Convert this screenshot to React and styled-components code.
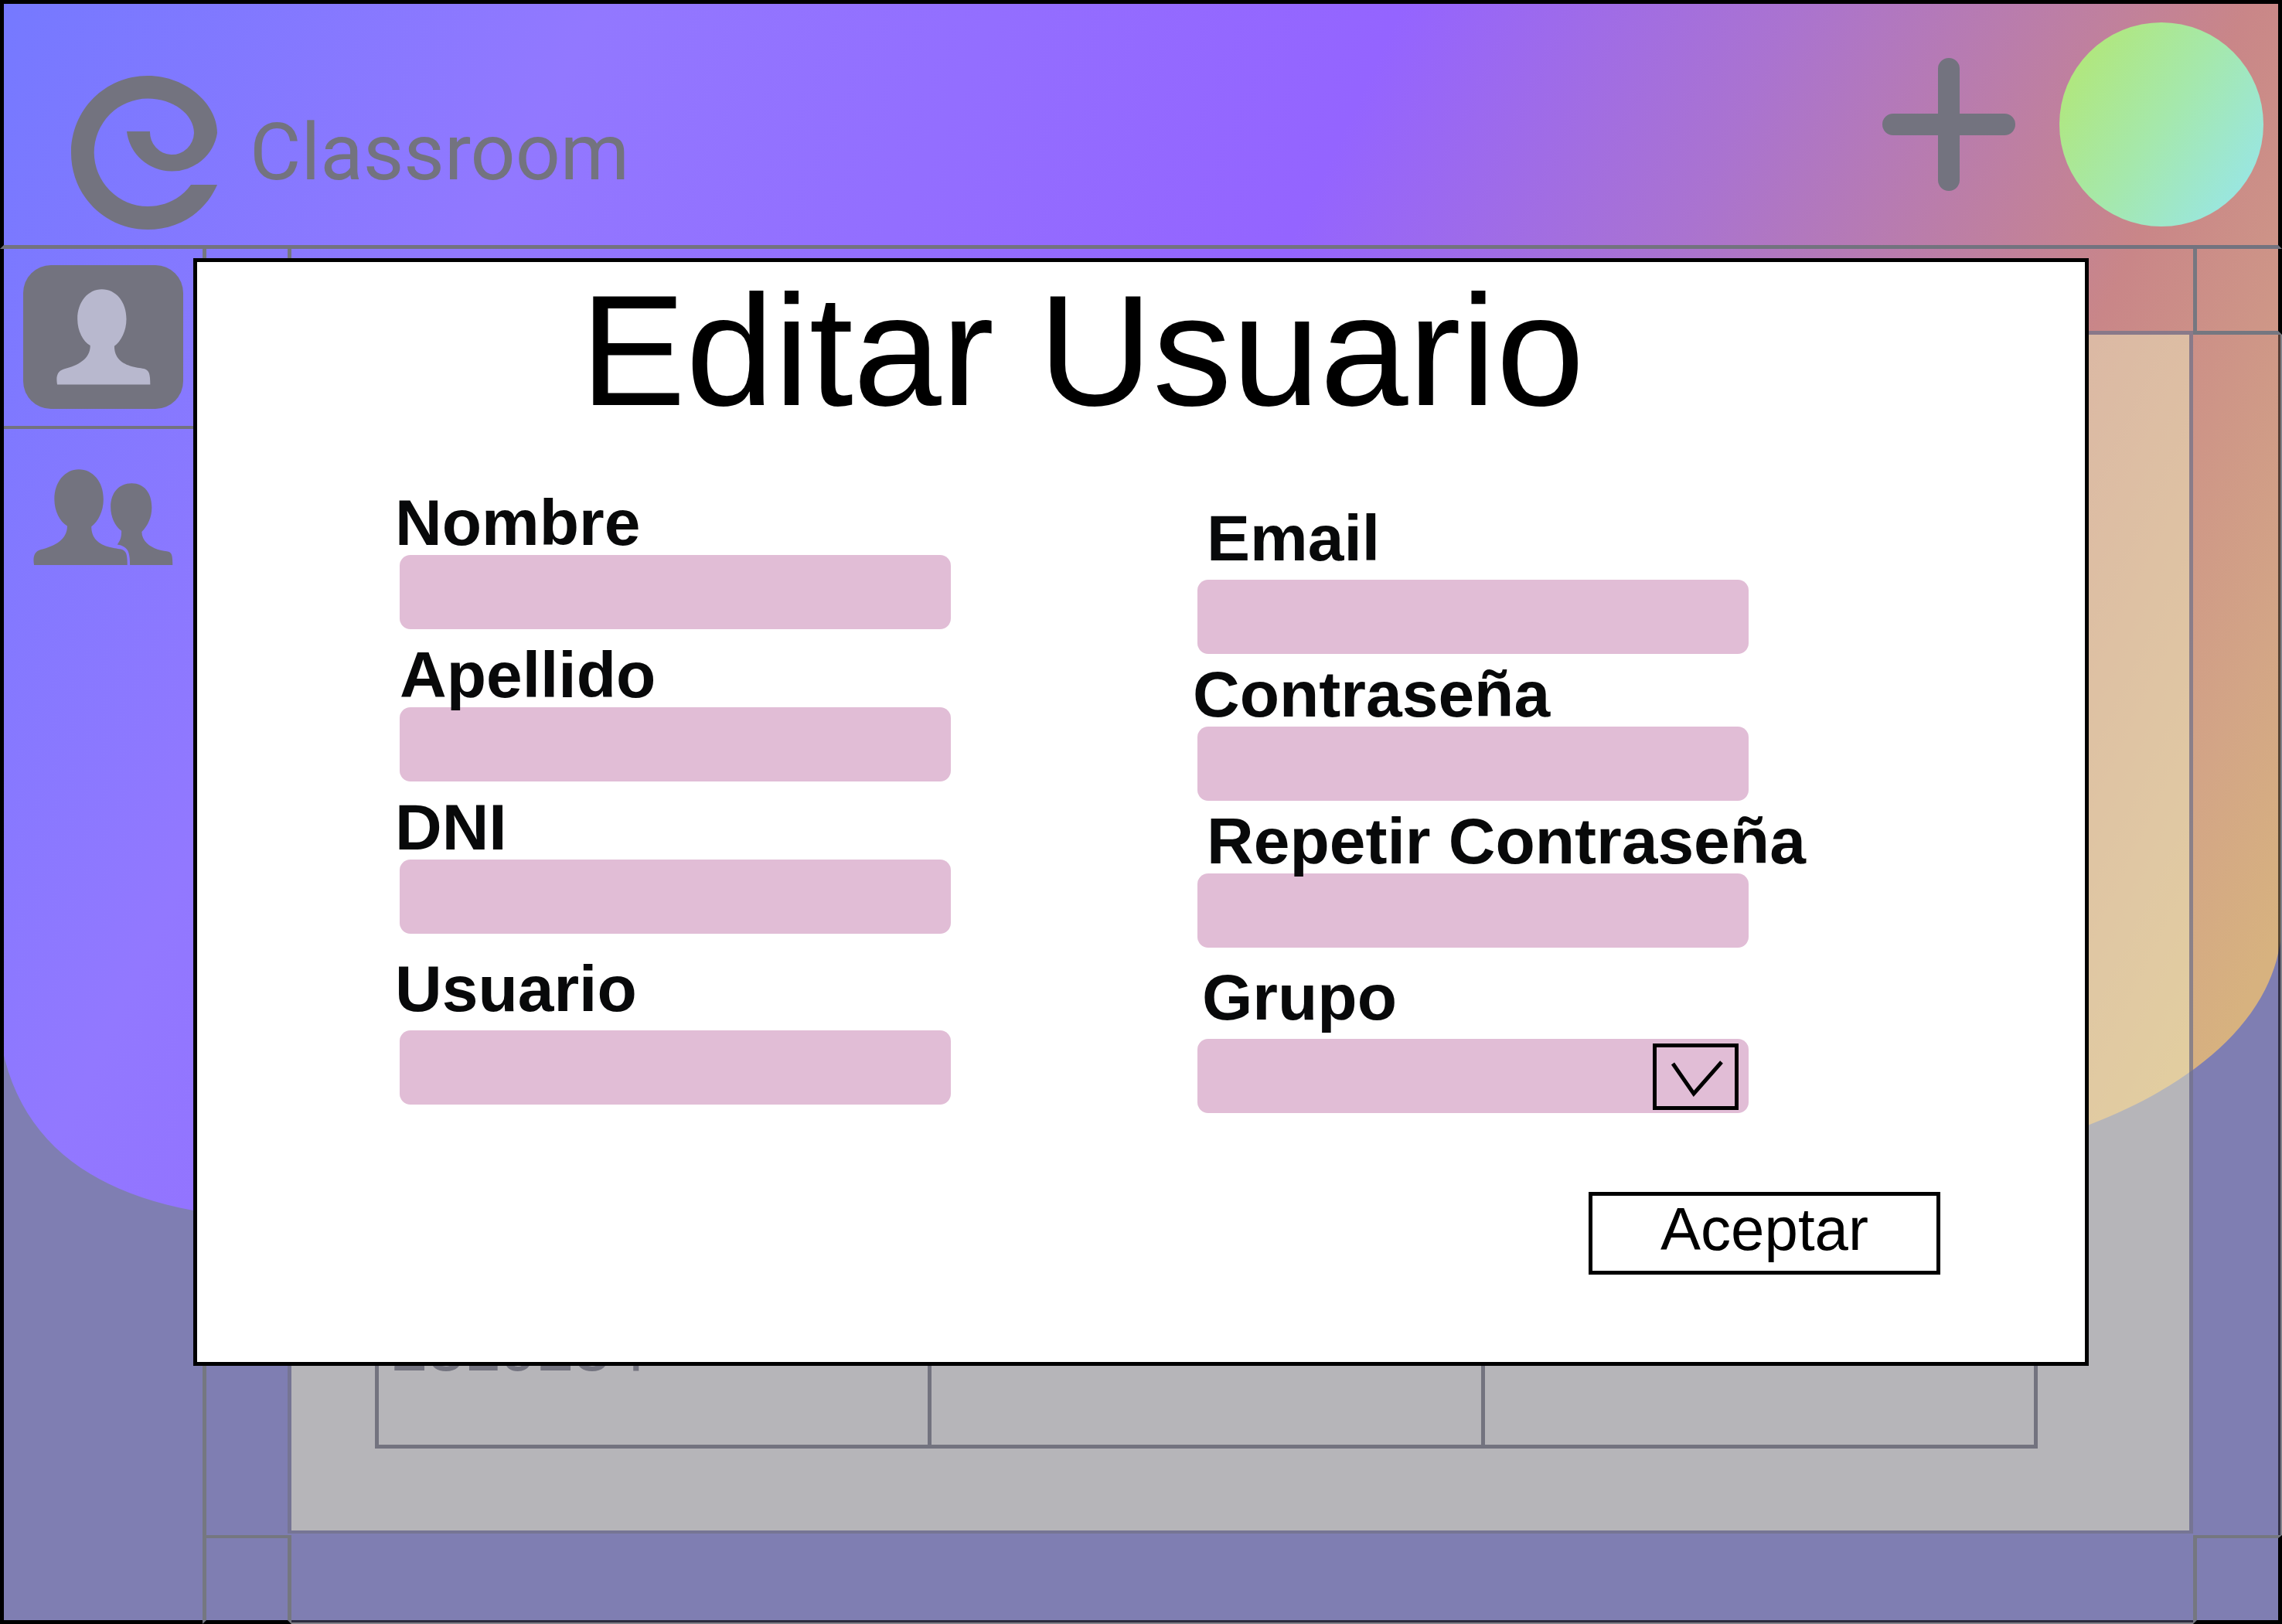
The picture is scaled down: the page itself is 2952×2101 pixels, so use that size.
import React from "react";
import styled, { createGlobalStyle } from "styled-components";

const ink = "#73737f";
const sans = `"Liberation Sans", Arial, sans-serif`;
const rounded = `"Arial Rounded MT Bold", "Liberation Sans", Arial, sans-serif`;

const GlobalStyle = createGlobalStyle`
  *, *::before, *::after { box-sizing: border-box; }
  body { margin: 0; font-family: ${sans}; }
  button, input, select { font: inherit; color: inherit; margin: 0; }
`;

const Screen = styled.div`
  position: relative;
  display: flex;
  flex-direction: column;
  min-height: 100vh;
  background: #7f7eb2;
  overflow: hidden;
`;

const Backdrop = styled.svg`
  position: absolute;
  inset: 0;
  width: 100%;
  height: 100%;
`;

const Header = styled.header`
  position: relative;
  display: flex;
  align-items: center;
  justify-content: space-between;
  height: 322px;
  padding: 0 19px 0 87px;
  border: 5px solid #000;
  border-bottom-color: ${ink};
`;

const Brand = styled.a`
  display: flex;
  align-items: center;
  gap: 42px;
  padding-top: 72px;
  color: ${ink};
  font-family: Roboto, sans-serif;
  font-size: 102px;
  line-height: 120px;
  text-decoration: none;
`;

const Tools = styled.div`
  display: flex;
  align-items: center;
  gap: 57px;
`;

const IconButton = styled.button`
  display: flex;
  padding: 0;
  border: 0;
  background: none;
`;

const Avatar = styled.button`
  width: 264px;
  height: 264px;
  padding: 0;
  border: 0;
  border-radius: 50%;
  background: linear-gradient(125deg, #b1e77c 12%, #a5e8ac 50%, #99e6e2 88%);
`;

const Body = styled.div`
  position: relative;
  flex: 1;
  display: grid;
  grid-template-columns: 262px 115px minmax(0, 1fr) 115px;
  grid-template-rows: 111px 1fr 115px;
`;

const Sidebar = styled.nav`
  grid-row: 1 / -1;
  border-left: 5px solid #000;
  border-bottom: 5px solid #000;
`;

const NavCell = styled.div`
  padding: 21px 0 22px 25px;
  border-bottom: ${(p) => (p.$divided ? `4px solid ${ink}` : "0")};
`;

const NavButton = styled.button`
  display: flex;
  align-items: center;
  justify-content: center;
  width: 207px;
  height: 186px;
  padding: 0;
  border: 0;
  border-radius: 36px;
  color: ${(p) => (p.$active ? "#b8b8ce" : ink)};
  background: ${(p) => (p.$active ? ink : "none")};
`;

const Corner = styled.div`
  border: 0 solid #757780;
  border-left-width: 5px;
  border-top-width: ${(p) => (p.$bottom ? "4px" : "0")};
  border-right: 5px solid ${(p) => (p.$outer ? "#000" : "#757780")};
  border-bottom: 5px solid ${(p) => (p.$bottom ? "#000" : "#757780")};
`;

const LeftEdge = styled.div`
  border-left: 5px solid #757780;
`;

const RightEdge = styled.div`
  margin-right: 2px;
  border-right: 3px solid rgba(0, 0, 0, 0.6);
  box-shadow: 2px 0 0 #82828a;
`;

const BottomEdge = styled.div`
  grid-column: 3;
  margin-bottom: 2px;
  border-bottom: 3px solid rgba(0, 0, 0, 0.65);
  box-shadow: 0 2px 0 #82828a;
`;

const TopEdge = styled.div``;

const Panel = styled.main`
  display: flex;
  flex-direction: column;
  justify-content: flex-end;
  margin: -5px 0 2px -5px;
  padding: 0 196px 106px 108px;
  border: 5px solid rgba(115, 115, 137, 0.75);
  border-bottom-width: 4px;
  background: rgba(237, 235, 191, 0.5);
  background-clip: padding-box;
`;

const Table = styled.table`
  width: 100%;
  table-layout: fixed;
  border-collapse: collapse;
  color: ${ink};
  font-size: 85px;
  line-height: 85px;
  text-align: left;
`;

const Cell = styled.td`
  padding: 16px 16px 83px;
  border: 5px solid ${ink};
`;

const Overlay = styled.div`
  position: absolute;
  inset: 0;
  display: flex;
  padding: 334px 250px;
`;

const Modal = styled.form`
  flex: 1;
  display: flex;
  flex-direction: column;
  padding-top: 12px;
  border: 5px solid #000;
  background: #fff;
  color: #000;
`;

const Title = styled.h1`
  margin: 0 0 79px;
  padding-right: 152px;
  font-size: 205px;
  font-weight: 400;
  line-height: 204px;
  text-align: center;
`;

const Fields = styled.div`
  display: grid;
  grid-template-columns: repeat(2, minmax(0, 1fr));
  align-items: start;
  gap: 319px;
  padding: 0 435px 0 262px;
`;

const Column = styled.div`
  display: flex;
  flex-direction: column;
  gap: ${(p) => p.$gap}px;
  padding-top: ${(p) => p.$top || 0}px;
`;

const Field = styled.div`
  display: flex;
  flex-direction: column;
  gap: ${(p) => (p.$roomy ? 12 : 0)}px;
  padding-top: ${(p) => (p.$roomy ? 12 : 0)}px;
`;

/* Descenders reach over the top edge of the box below. */
const Label = styled.label`
  z-index: 1;
  margin-left: ${(p) => p.$shift}px;
  color: #08090a;
  font-family: ${rounded};
  font-size: 84px;
  font-weight: 700;
  line-height: 84px;
  white-space: nowrap;
`;

const TextInput = styled.input`
  width: 100%;
  height: 96px;
  padding: 0 20px;
  border: 0;
  border-radius: 14px;
  background: #e1bdd6;
  font-size: 56px;
`;

const SelectBox = styled.div`
  position: relative;
`;

const Select = styled.select`
  display: block;
  width: 100%;
  height: 96px;
  padding: 0 130px 0 20px;
  border: 0;
  border-radius: 14px;
  background: #e1bdd6;
  font-size: 56px;
  appearance: none;
`;

const Arrow = styled.svg`
  position: absolute;
  top: 6px;
  right: 13px;
  pointer-events: none;
`;

const Footer = styled.div`
  display: flex;
  justify-content: flex-end;
  margin-top: auto;
  padding: 0 187px 113px 0;
`;

const Submit = styled.button`
  width: 455px;
  height: 107px;
  padding: 0 0 12px;
  border: 5px solid #000;
  background: #fff;
  font-size: 78px;
  line-height: 84px;
`;

const personPath =
  "M168 262C140 245 118 205 118 158C118 90 160 42 213 42C268 42 309 90 309 158C309 205 288 245 262 264C262 310 290 332 332 344C350 349 370 350 382 354C398 360 402 375 402 414H39C34 385 38 362 65 354C120 340 168 315 168 262Z";

function TextField({ id, label, type = "text", shift = -6, roomy }) {
  return (
    <Field $roomy={roomy}>
      <Label htmlFor={id} $shift={shift}>{label}</Label>
      <TextInput id={id} name={id} type={type} />
    </Field>
  );
}

export default function App() {
  return (
    <>
      <GlobalStyle />
      <Screen>
        <Backdrop viewBox="0 0 2952 2101" preserveAspectRatio="none" aria-hidden="true">
          <defs>
            <linearGradient id="sky" gradientUnits="userSpaceOnUse" x1="0" y1="0" x2="2872" y2="1367">
              <stop offset="0" stopColor="#7579ff" />
              <stop offset="0.22" stopColor="#9278ff" />
              <stop offset="0.516" stopColor="#9464ff" />
              <stop offset="0.66" stopColor="#aa73d0" />
              <stop offset="0.827" stopColor="#c98688" />
              <stop offset="0.945" stopColor="#d3a586" />
              <stop offset="1" stopColor="#d7b27f" />
            </linearGradient>
          </defs>
          <path
            fill="url(#sky)"
            d="M0 0H2952V1190C2952 1310 2845 1400 2703 1455C2200 1640 800 1680 250 1566C110 1540 20 1470 0 1340Z"
          />
        </Backdrop>

        <Header>
          <Brand href="#">
            <svg width="189" height="199" viewBox="92 97 189 199" fill="currentColor" aria-hidden="true">
              <path d="M164 169H194A28.5 29 0 0 0 251 171C251 147 224 126.500 191 126.500A69.500 70 0 0 0 121.700 196.500A69.500 70 0 0 0 191 266C214 266 234 256 247 238H281C265 275 230 296 191 296C136 296 92 252 92 197C92 141 136 97 191 97C241 97 281 134 281 171A59 58 0 0 1 164 169Z" />
            </svg>
            <span>Classroom</span>
          </Brand>
          <Tools>
            <IconButton type="button" aria-label="Añadir">
              <svg width="172" height="172" viewBox="0 0 172 172" aria-hidden="true">
                <path d="M86 14V158M14 86H158" stroke={ink} strokeWidth="28" strokeLinecap="round" />
              </svg>
            </IconButton>
            <Avatar type="button" aria-label="Perfil" />
          </Tools>
        </Header>

        <Body>
          <Sidebar>
            <NavCell $divided>
              <NavButton type="button" $active aria-label="Usuario">
                <svg width="122" height="124" viewBox="36 42 368 373" fill="currentColor" aria-hidden="true">
                  <path d={personPath} />
                </svg>
              </NavButton>
            </NavCell>
            <NavCell>
              <NavButton type="button" aria-label="Grupos">
                <svg width="181" height="124" viewBox="38 38 542 373" fill="currentColor" aria-hidden="true">
                  <path transform="translate(1 -3)" d={personPath} />
                  <path d="M380 278C355 260 338 225 338 185C338 130 370 93 420 93C468 93 498 130 498 187C498 225 483 258 459 282C459 318 490 340 520 350C540 356 555 356 566 360C577 366 579 380 579 411H413C413 370 408 350 390 340C383 335 374 333 364 331C378 312 380 300 380 278Z" />
                </svg>
              </NavButton>
            </NavCell>
          </Sidebar>
          <Corner />
          <TopEdge />
          <Corner $outer />
          <LeftEdge />
          <Panel>
            <Table>
              <tbody>
                <tr>
                  <Cell>2319234</Cell>
                  <Cell />
                  <Cell />
                </tr>
              </tbody>
            </Table>
          </Panel>
          <RightEdge />
          <Corner $bottom />
          <BottomEdge />
          <Corner $bottom $outer />
        </Body>

        <Overlay>
          <Modal role="dialog" aria-labelledby="titulo" onSubmit={(e) => e.preventDefault()}>
            <Title id="titulo">Editar Usuario</Title>
            <Fields>
              <Column $gap={17}>
                <TextField id="nombre" label="Nombre" />
                <TextField id="apellido" label="Apellido" shift={0} />
                <TextField id="dni" label="DNI" />
                <TextField id="usuario" label="Usuario" roomy />
              </Column>
              <Column $gap={10} $top={8}>
                <TextField id="email" label="Email" type="email" shift={12} roomy />
                <TextField id="clave" label="Contraseña" type="password" />
                <TextField id="clave2" label="Repetir Contraseña" type="password" shift={12} />
                <Field $roomy>
                  <Label htmlFor="grupo" $shift={6}>Grupo</Label>
                  <SelectBox>
                    <Select id="grupo" name="grupo" />
                    <Arrow width="111" height="86" viewBox="0 0 111 86" fill="none" stroke="#000" strokeWidth="5" aria-hidden="true">
                      <rect x="2.5" y="2.5" width="106" height="81" />
                      <path d="M26 26L53 65L89 24" />
                    </Arrow>
                  </SelectBox>
                </Field>
              </Column>
            </Fields>
            <Footer>
              <Submit type="submit">Aceptar</Submit>
            </Footer>
          </Modal>
        </Overlay>
      </Screen>
    </>
  );
}
